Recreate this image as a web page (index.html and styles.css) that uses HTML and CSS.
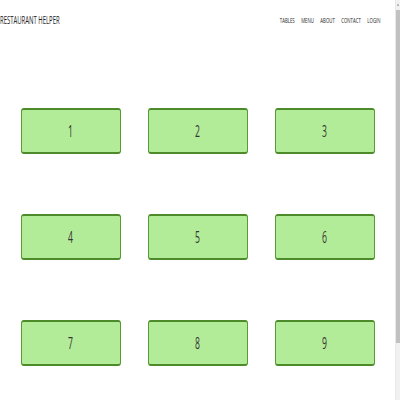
FILE: index.html
```html
<!DOCTYPE html>
<html>
<head>
<meta charset="utf-8">
<link rel="stylesheet" href="styles.css">
</head>
<body>
<header class="top">
  <div class="brand"><span class="squish">RESTAURANT HELPER</span></div>
  <nav class="nav"><span class="squish nav-inner"><a>TABLES</a><a>MENU</a><a>ABOUT</a><a>CONTACT</a><a>LOGIN</a></span></nav>
</header>
<main class="tables">
  <div class="table"><span class="squish">1</span></div>
  <div class="table"><span class="squish">2</span></div>
  <div class="table"><span class="squish">3</span></div>
  <div class="table"><span class="squish">4</span></div>
  <div class="table"><span class="squish">5</span></div>
  <div class="table"><span class="squish">6</span></div>
  <div class="table"><span class="squish">7</span></div>
  <div class="table"><span class="squish">8</span></div>
  <div class="table"><span class="squish">9</span></div>
</main>
<div class="scrollbar"><span class="arrow"></span><div class="thumb"></div></div>
</body>
</html>
```
FILE: styles.css
```css
html { scrollbar-width: none; }
body {
  margin: 0;
  font-family: "Open Sans", sans-serif;
  color: #222;
  background: #fff;
  padding-right: 5px;
  min-height: 459px;
}
.squish {
  display: inline-block;
  transform: scaleX(0.54);
}
.top {
  display: flex;
  justify-content: space-between;
  align-items: center;
  height: 40px;
}
.brand {
  font-size: 11px;
  line-height: 14px;
  width: 70px;
  white-space: nowrap;
}
.brand .squish { transform-origin: left center; }
.nav {
  font-size: 8px;
  line-height: 12px;
  white-space: nowrap;
  padding-right: 14px;
}
.nav-inner { transform-origin: right center; }
.nav a { margin-left: 12px; }
.tables {
  display: grid;
  grid-template-columns: repeat(3, 100px);
  grid-auto-rows: 46px;
  column-gap: 27px;
  row-gap: 60px;
  justify-content: center;
  padding-top: 68px;
}
.table {
  box-sizing: border-box;
  background: #b3ec98;
  border: 1px solid #5a9a35;
  border-top: 2px solid #4c8a2a;
  border-bottom: 2px solid #4c8a2a;
  border-radius: 3px;
  display: flex;
  align-items: center;
  justify-content: center;
  font-size: 16px;
  color: #333;
}
.scrollbar {
  position: fixed;
  top: 0;
  right: 0;
  width: 5px;
  height: 400px;
  background: #f1f1f1;
  border-left: 1px solid #e8e8e8;
  box-sizing: border-box;
}
.arrow {
  position: absolute;
  top: 3px;
  left: 1px;
  width: 0;
  height: 0;
  border-left: 1.5px solid transparent;
  border-right: 1.5px solid transparent;
  border-bottom: 3px solid #a3a3a3;
}
.thumb {
  position: absolute;
  top: 10px;
  left: 0;
  right: 0;
  height: 333px;
  background: #c1c1c1;
}
```
